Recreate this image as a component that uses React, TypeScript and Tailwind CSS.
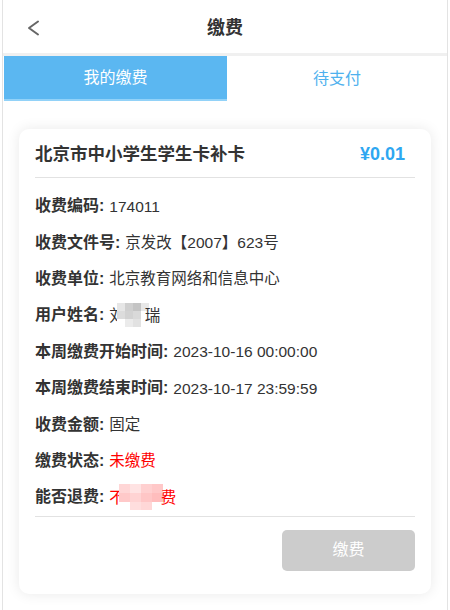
import React from "react";

const font = { fontFamily: '"Liberation Sans", "Noto Sans CJK SC", sans-serif' };

interface Row {
    label: string;
    value?: string;
    red?: boolean;
    mosaic?: "name" | "refund";
}

const rows: Row[] = [
    { label: "收费编码", value: "174011" },
    { label: "收费文件号", value: "京发改【2007】623号" },
    { label: "收费单位", value: "北京教育网络和信息中心" },
    { label: "用户姓名", mosaic: "name" },
    { label: "本周缴费开始时间", value: "2023-10-16 00:00:00" },
    { label: "本周缴费结束时间", value: "2023-10-17 23:59:59" },
    { label: "收费金额", value: "固定" },
    { label: "缴费状态", value: "未缴费", red: true },
    { label: "能否退费", mosaic: "refund" },
];

// 打码块
const NameMosaic = () => (
    <span className="relative inline-flex items-center">
        <span className="text-[#333]">刘</span>
        <span className="inline-grid grid-cols-4 w-[32px] h-[24px] -ml-[8px]">
            <span className="bg-[#e6e6e6]" />
            <span className="bg-[#cfcfcf]" />
            <span className="bg-[#c4c4c4]" />
            <span className="bg-[#e8e8e8]" />
            <span className="bg-[#dcdcdc]" />
            <span className="bg-[#d2d2d2]" />
            <span className="bg-[#d9d9d9]" />
            <span className="bg-white" />
            <span className="bg-white" />
            <span className="bg-[#ebebeb]" />
            <span className="bg-[#e2e2e2]" />
            <span className="bg-white" />
        </span>
        <span className="text-[#333] -ml-[4px]">瑞</span>
    </span>
);

const RefundMosaic = () => (
    <span className="inline-flex items-center text-[#ff0000]">
        <span>不</span>
        <span className="inline-grid grid-cols-4 w-[44px] h-[26px] -ml-[6px]">
            <span className="bg-[#ffd6d6]" />
            <span className="bg-[#ffe3e3]" />
            <span className="bg-[#ffd0d0]" />
            <span className="bg-[#ffc8c8]" />
            <span className="bg-[#ffc9c9]" />
            <span className="bg-[#ffd3d3]" />
            <span className="bg-[#ffc6c6]" />
            <span className="bg-[#ffbdbd]" />
            <span className="bg-white" />
            <span className="bg-[#ffdede]" />
            <span className="bg-[#ffd7d7]" />
            <span className="bg-white" />
        </span>
        <span className="-ml-[2px]">费</span>
    </span>
);

export default function App() {
    return (
        <div className="w-[450px] h-[610px] bg-white overflow-hidden" style={font}>
            <div className="ml-[2px] w-[446px] h-full border-x border-[#e3e3e3] flex flex-col">
                {/* 顶部导航 */}
                <div className="relative h-[53px] pt-[3px] flex items-center justify-center">
                    <svg
                        className="absolute left-[22px] top-[19px]"
                        width="16"
                        height="18"
                        viewBox="0 0 16 18"
                        fill="none"
                    >
                        <path d="M13 2.5 L4 9 L13 15.5" stroke="#666" strokeWidth="2" strokeLinecap="round" strokeLinejoin="round" />
                    </svg>
                    <span className="text-[18px] font-bold text-[#333]">缴费</span>
                </div>
                <div className="h-[3px] bg-[#f0f0f0]" />

                {/* 标签页 */}
                <div className="flex h-[45px] pl-[1px]">
                    <div className="w-[223px] bg-[#5bb7f1] border-b-2 border-[#92d2f8] flex items-center justify-center text-white text-[16px]">
                        我的缴费
                    </div>
                    <div className="flex-1 flex items-center justify-center text-[#4fb1ee] text-[16px]">
                        待支付
                    </div>
                </div>

                {/* 缴费卡片 */}
                <div className="px-[16px] pt-[28px]">
                    <div className="rounded-[10px] bg-white shadow-[0_0_14px_rgba(0,0,0,0.09)] px-[16px] pb-[23px]">
                        <div className="flex items-center justify-between h-[49px] pt-[2px] pr-[10px] border-b border-[#e2e2e2]">
                            <span className="text-[17.5px] font-bold text-[#333]">北京市中小学生学生卡补卡</span>
                            <span className="text-[18px] font-bold text-[#2ea7f1]">¥0.01</span>
                        </div>
                        <div className="pt-[10px] border-b border-[#e2e2e2]">
                            {rows.map((row) => (
                                <div key={row.label} className="h-[36.4px] flex items-center text-[#333]">
                                    <span className="font-bold text-[16px]">{row.label}:</span>
                                    <span className="ml-[5px] text-[15.5px]">
                                        {row.mosaic === "name" ? (
                                            <NameMosaic />
                                        ) : row.mosaic === "refund" ? (
                                            <RefundMosaic />
                                        ) : (
                                            <span className={row.red ? "text-[#ff0000]" : ""}>{row.value}</span>
                                        )}
                                    </span>
                                </div>
                            ))}
                        </div>
                        <div className="flex justify-end pt-[13px]">
                            <button className="w-[133px] h-[41px] rounded-[5px] bg-[#cccccc] text-white text-[16px]">
                                缴费
                            </button>
                        </div>
                    </div>
                </div>
            </div>
        </div>
    );
}
